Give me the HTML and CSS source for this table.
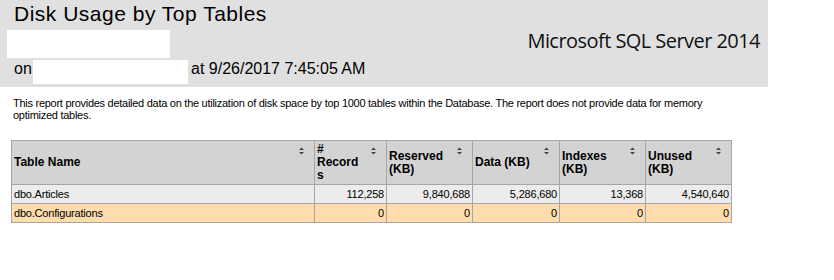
FILE: index.html
```html
<!DOCTYPE html>
<html lang="en">
  <head>
    <meta charset="UTF-8" />
    <title>Disk Usage by Top Tables</title>
    <link rel="stylesheet" href="styles.css">
  </head>
  <body>
    <!-- report header band -->
    <header class="report-header">
      <div class="header-left">
        <div class="report-title">Disk Usage by Top Tables</div>
        <div class="server-name"></div>
        <div class="run-info">
          <span class="run-on">on</span>
          <span class="db-name"></span>
          <span class="run-at">at 9/26/2017 7:45:05 AM</span>
        </div>
      </div>
      <div class="product-name">Microsoft SQL Server 2014</div>
    </header>

    <p class="report-desc">
      This report provides detailed data on the utilization of disk space by top 1000 tables within the Database. The report does not provide data for memory optimized tables.
    </p>

    <!-- table list -->
    <table class="usage-table">
      <colgroup>
        <col class="col-name" />
        <col class="col-records" />
        <col class="col-kb" />
        <col class="col-kb2" />
        <col class="col-kb" />
        <col class="col-kb" />
      </colgroup>
      <thead>
        <tr>
          <th>Table Name<span class="sort-icon"><svg width="7" height="10" viewBox="0 0 7 10"><polygon points="1,4 3.5,1.5 6,4" /><polygon points="1,6 3.5,8.5 6,6" /></svg></span></th>
          <th># Records<span class="sort-icon"><svg width="7" height="10" viewBox="0 0 7 10"><polygon points="1,4 3.5,1.5 6,4" /><polygon points="1,6 3.5,8.5 6,6" /></svg></span></th>
          <th>Reserved (KB)<span class="sort-icon"><svg width="7" height="10" viewBox="0 0 7 10"><polygon points="1,4 3.5,1.5 6,4" /><polygon points="1,6 3.5,8.5 6,6" /></svg></span></th>
          <th>Data (KB)<span class="sort-icon"><svg width="7" height="10" viewBox="0 0 7 10"><polygon points="1,4 3.5,1.5 6,4" /><polygon points="1,6 3.5,8.5 6,6" /></svg></span></th>
          <th>Indexes (KB)<span class="sort-icon"><svg width="7" height="10" viewBox="0 0 7 10"><polygon points="1,4 3.5,1.5 6,4" /><polygon points="1,6 3.5,8.5 6,6" /></svg></span></th>
          <th>Unused (KB)<span class="sort-icon"><svg width="7" height="10" viewBox="0 0 7 10"><polygon points="1,4 3.5,1.5 6,4" /><polygon points="1,6 3.5,8.5 6,6" /></svg></span></th>
        </tr>
      </thead>
      <tbody>
        <tr class="row-odd">
          <td>dbo.Articles</td>
          <td class="num">112,258</td>
          <td class="num">9,840,688</td>
          <td class="num">5,286,680</td>
          <td class="num">13,368</td>
          <td class="num">4,540,640</td>
        </tr>
        <tr class="row-even">
          <td>dbo.Configurations</td>
          <td class="num">0</td>
          <td class="num">0</td>
          <td class="num">0</td>
          <td class="num">0</td>
          <td class="num">0</td>
        </tr>
      </tbody>
    </table>
  </body>
</html>
```

FILE: styles.css
```css
html,
body {
  margin: 0;
  padding: 0;
  background-color: #fff;
  color: #000;
  font-family: "Liberation Sans", Arial, sans-serif;
}

/* 上部のグレー帯 */
.report-header {
  display: flex;
  justify-content: space-between;
  align-items: flex-start;
  width: 768px;
  height: 87px;
  box-sizing: border-box;
  padding: 2px 8px 0 7px;
  background-color: #e0e0e0;
}

.header-left {
  display: flex;
  flex-direction: column;
}

.report-title {
  padding-left: 7px;
  font-size: 21px;
  line-height: 24px;
  letter-spacing: 0.5px;
}

/* 塗りつぶされたサーバー名 */
.server-name {
  width: 163px;
  height: 28px;
  margin-top: 4px;
  background-color: #fff;
}

.run-info {
  display: flex;
  align-items: flex-start;
  margin-top: 2px;
  font-size: 16px;
  line-height: 18px;
}

.run-on {
  padding-left: 7px;
  width: 19px;
}

.db-name {
  width: 155px;
  height: 24px;
  margin-right: 3px;
  background-color: #fff;
}

.product-name {
  margin-top: 26px;
  font-family: "Open Sans", sans-serif;
  font-size: 20px;
  line-height: 26px;
  letter-spacing: -0.55px;
  color: #111;
}

.report-desc {
  width: 720px;
  margin: 10px 0 0 13px;
  font-size: 11px;
  line-height: 12px;
  letter-spacing: -0.27px;
}

/* テーブル */
.usage-table {
  margin: 19px 0 0 11px;
  border-collapse: collapse;
  table-layout: fixed;
  width: 721px;
  font-size: 11px;
}

.col-name {
  width: 303px;
}
.col-records {
  width: 72px;
}
.col-kb {
  width: 86px;
}
.col-kb2 {
  width: 87px;
}

.usage-table th,
.usage-table td {
  border: 1px solid #a6a6a6;
}

.usage-table th {
  position: relative; /* ソートアイコン用 */
  height: 43px;
  padding: 0 24px 0 2px;
  background-color: #d3d3d3;
  font-size: 12px;
  line-height: 13px;
  text-align: left;
  vertical-align: middle;
  overflow-wrap: anywhere;
}

.sort-icon {
  position: absolute;
  top: 5px;
  right: 9px;
  line-height: 0;
}

.sort-icon svg {
  fill: #444;
}

.usage-table td {
  height: 18px;
  padding: 0 2px;
  line-height: 13px;
  letter-spacing: -0.2px;
  white-space: nowrap;
}

.usage-table td.num {
  text-align: right;
}

.row-odd td {
  background-color: #ececec;
}

.row-even td {
  background-color: #fedcad;
}
```
